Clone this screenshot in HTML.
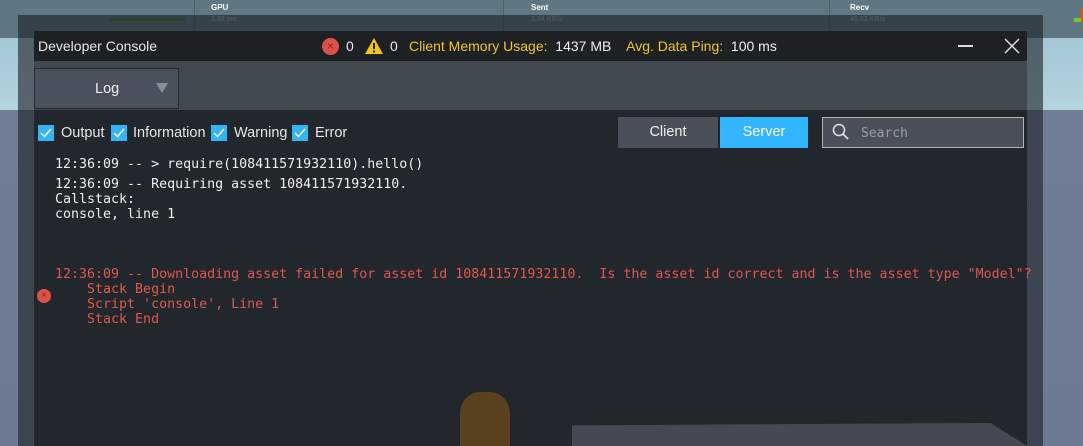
<!DOCTYPE html>
<html><head><meta charset="utf-8"><style>
*{margin:0;padding:0;box-sizing:border-box}
body{width:1083px;height:446px;overflow:hidden;position:relative;background:#6b7b92;font-family:"Liberation Sans",sans-serif}
.a{position:absolute}
.mono{font-family:"DejaVu Sans Mono","Liberation Mono",monospace;font-size:13.3px;line-height:15px;white-space:pre}
.cb{position:absolute;top:125px;width:16px;height:16px;background:#33b5f5}
.cb svg{position:absolute;left:2px;top:2px}
.lbl{position:absolute;top:125px;color:#e6e6e6;font-size:14.5px}
</style></head><body>
<div class="a" style="left:0;top:0;width:1083px;height:38px;background:#5e7782"></div>
<div class="a" style="left:0;top:38px;width:1083px;height:72px;background:linear-gradient(#a3c7d5,#b3d3dc)"></div>
<div class="a" style="left:0;top:110px;width:1083px;height:336px;background:linear-gradient(#707e95,#6c7a93)"></div>
<div class="a" style="left:194px;top:0;width:1px;height:38px;background:#4d626b"></div>
<div class="a" style="left:503px;top:0;width:1px;height:38px;background:#4d626b"></div>
<div class="a" style="left:829px;top:0;width:1px;height:38px;background:#4d626b"></div>
<div class="a" style="left:211px;top:3px;color:#fff;font-size:8px;font-weight:bold">GPU</div>
<div class="a" style="left:211px;top:16px;color:#9aa7ad;font-size:7px;font-weight:bold">2.88 ms</div>
<div class="a" style="left:531px;top:3px;color:#fff;font-size:8px;font-weight:bold">Sent</div>
<div class="a" style="left:531px;top:16px;color:#9aa7ad;font-size:7px;font-weight:bold">2.04 KB/s</div>
<div class="a" style="left:850px;top:3px;color:#fff;font-size:8px;font-weight:bold">Recv</div>
<div class="a" style="left:850px;top:16px;color:#9aa7ad;font-size:7px;font-weight:bold">45.03 KB/s</div>
<div class="a" style="left:110px;top:18px;width:75px;height:3px;background:#3f7a20"></div>
<div class="a" style="left:1074px;top:18px;width:9px;height:4px;background:#7cc420"></div>
<div class="a" style="left:1081px;top:8px;width:2px;height:14px;background:#e05020"></div>
<div class="a" style="left:18px;top:15px;width:1025px;height:431px;background:rgba(30,34,40,0.62)"></div>
<div class="a" style="left:34px;top:31px;width:993px;height:30px;background:#1d2124"></div>
<div class="a" style="left:38px;top:38px;color:#e8e8e8;font-size:14px">Developer Console</div>
<div class="a" style="left:322px;top:38px;width:17px;height:17px;border-radius:50%;background:#dc5246;color:#8a2a22;font-size:12px;line-height:17px;text-align:center">×</div>
<div class="a" style="left:346px;top:38px;color:#e8e8e8;font-size:14px">0</div>
<svg class="a" style="left:365px;top:38px" width="18" height="16"><path d="M9 0 L18 16 L0 16Z" fill="#f5c518"/><rect x="8" y="5" width="2" height="6" fill="#222"/><rect x="8" y="12.5" width="2" height="2" fill="#222"/></svg>
<div class="a" style="left:390px;top:38px;color:#e8e8e8;font-size:14px">0</div>
<div class="a" style="left:409px;top:38px;color:#f0c330;font-size:14px;white-space:pre">Client Memory Usage:  <span style="color:#eee">1437 MB</span>    Avg. Data Ping:  <span style="color:#eee">100 ms</span></div>
<div class="a" style="left:958px;top:45px;width:15px;height:1.5px;background:#ddd"></div>
<svg class="a" style="left:1004px;top:38px" width="16" height="16"><path d="M1 1L15 15M15 1L1 15" stroke="#ddd" stroke-width="1.5"/></svg>
<div class="a" style="left:34px;top:61px;width:993px;height:49px;background:#40494f"></div>
<div class="a" style="left:34px;top:68px;width:145px;height:41px;background:#4b515c;border:1px solid #262b32"></div>
<div class="a" style="left:95px;top:81px;color:#eee;font-size:14.5px">Log</div>
<svg class="a" style="left:156px;top:83px" width="12" height="11"><path d="M0 0H12L6 10Z" fill="#8a8f95"/></svg>
<div class="a" style="left:34px;top:110px;width:993px;height:336px;background:#22262d"></div>
<div class="cb" style="left:38px"><svg width="12" height="12"><path d="M1 6L4.5 9.5L11 2" stroke="#fff" stroke-width="1.4" fill="none"/></svg></div>
<div class="lbl" style="left:61px">Output</div>
<div class="cb" style="left:111px"><svg width="12" height="12"><path d="M1 6L4.5 9.5L11 2" stroke="#fff" stroke-width="1.4" fill="none"/></svg></div>
<div class="lbl" style="left:133px">Information</div>
<div class="cb" style="left:211px"><svg width="12" height="12"><path d="M1 6L4.5 9.5L11 2" stroke="#fff" stroke-width="1.4" fill="none"/></svg></div>
<div class="lbl" style="left:234px">Warning</div>
<div class="cb" style="left:292px"><svg width="12" height="12"><path d="M1 6L4.5 9.5L11 2" stroke="#fff" stroke-width="1.4" fill="none"/></svg></div>
<div class="lbl" style="left:315px">Error</div>
<div class="a" style="left:618px;top:117px;width:100px;height:31px;background:#4a505a;color:#eee;font-size:14.5px;text-align:center;line-height:31px">Client</div>
<div class="a" style="left:720px;top:117px;width:88px;height:31px;background:#33b5ff;color:#fff;font-size:14.5px;text-align:center;line-height:31px">Server</div>
<div class="a" style="left:822px;top:117px;width:202px;height:31px;background:#4a505a;border:1px solid #b0b4b8"></div>
<svg class="a" style="left:832px;top:123px" width="18" height="18"><circle cx="7" cy="7" r="5.5" stroke="#ddd" stroke-width="1.6" fill="none"/><path d="M11 11L16 16" stroke="#ddd" stroke-width="1.8"/></svg>
<div class="a" style="left:861px;top:126px;color:#9a9ea4;font-size:13px;font-family:'DejaVu Sans Mono',monospace">Search</div>
<div class="a mono" style="left:55px;top:157px;color:#eee">12:36:09 -- &gt; require(108411571932110).hello()</div>
<div class="a mono" style="left:55px;top:177px;color:#eee">12:36:09 -- Requiring asset 108411571932110.
Callstack:
console, line 1</div>
<div class="a mono" style="left:55px;top:267px;color:#e0584c">12:36:09 -- Downloading asset failed for asset id 108411571932110.  Is the asset id correct and is the asset type "Model"?
    Stack Begin
    Script 'console', Line 1
    Stack End</div>
<div class="a" style="left:37px;top:289px;width:14px;height:14px;border-radius:50%;background:#dc5246;color:#8a2a22;font-size:10px;line-height:14px;text-align:center">×</div>
<div class="a" style="left:572px;top:423px;width:455px;height:23px;background:#444954;clip-path:polygon(0 10%,92% 0,100% 100%,0 100%)"></div>
<div class="a" style="left:460px;top:392px;width:50px;height:54px;background:#5a4220;border-radius:40% 40% 0 0"></div>
</body></html>
